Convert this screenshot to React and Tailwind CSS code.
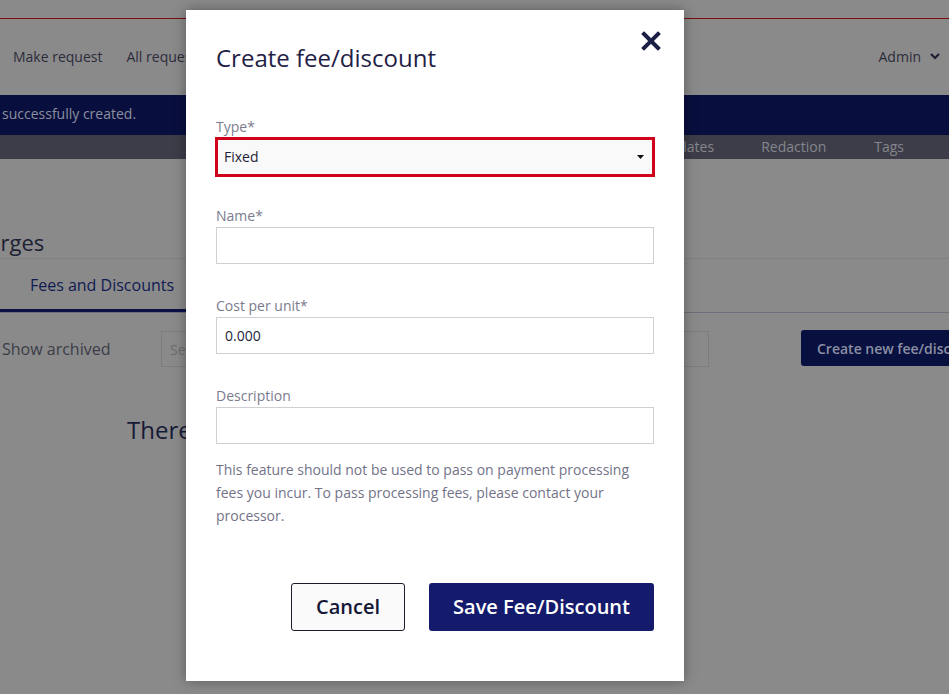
import React from "react";

// Page behind the dialog is drawn in its dimmed colours
const BackgroundPage = () => {
  return (
    <div className="min-h-[694px] bg-[#8a8a8a] text-[#232333]">
      <div className="h-[18px]" />
      <div className="h-px bg-[#7a0c10]" />
      <header className="h-[76px] flex items-center justify-between text-[14px] text-[#2c2c3a] -mt-[1px]">
        <nav className="flex items-center pl-[13px] gap-[24px]">
          <span>Make request</span>
          <span>All requests</span>
        </nav>
        <div className="flex items-center gap-2 pr-[8px] text-[14px]">
          <span>Admin</span>
          <svg width="12" height="12" viewBox="0 0 12 12" fill="none">
            <path d="M2 4l4 4 4-4" stroke="#1e2034" strokeWidth="2.2" />
          </svg>
        </div>
      </header>
      <div className="h-10 mt-[1px] bg-[#080f3e] flex items-center pl-[2px] pb-[3px] text-[14px] text-[#8c8f9e]">
        successfully created.
      </div>
      <div className="h-6 bg-[#3c3d48] flex items-center justify-end pb-[2px] text-[14px] text-[#85868d]">
        <span className="mr-[47px]">Templates</span>
        <span className="mr-[48px]">Redaction</span>
        <span className="mr-[45px]">Tags</span>
      </div>
      <div className="pt-[68px] overflow-hidden">
        <h1 className="text-[22px] leading-[30px] text-[#1d1f35] ml-[-39px] whitespace-nowrap">
          Charges
        </h1>
        <div className="h-px bg-[#7f7f86] mt-[1px]" />
        <div className="flex border-b border-[#6e6e78]">
          <div className="w-[204px] h-[53px] flex items-center justify-center pt-[2px] text-[16px] text-[#101a52] border-b-[3px] border-[#0b1145]">
            Fees and Discounts
          </div>
        </div>
        <div className="flex items-center h-[52px] mt-[10px]">
          <span className="pl-[2px] text-[16px] text-[#3c3c48] w-[161px]">Show archived</span>
          <div className="w-[548px] h-9 border border-[#7d7d7d] flex items-center pl-2 text-[14px] text-[#6a6a6a]">
            Search
          </div>
          <div className="ml-auto -mt-[2px] h-9 w-[148px] bg-[#081040] rounded-l-[3px] flex items-center pl-4 text-[14px] font-semibold text-[#8b8fa3] whitespace-nowrap overflow-hidden">
            Create new fee/discount
          </div>
        </div>
        <p className="mt-[37px] pl-[127px] text-[24px] text-[#161a36] whitespace-nowrap">
          There are no fees or discounts in this portal.
        </p>
      </div>
    </div>
  );
};

const Field = ({ label, value, className }) => (
  <div className={className}>
    <label className="block text-[14px] leading-[20px] text-[#7b7b8e] mb-px">{label}</label>
    <div className="h-[37px] border border-[#cfcfd4] flex items-center px-2 text-[14px] text-[#1d1f38]">
      {value}
    </div>
  </div>
);

const App = () => {
  return (
    <div className="relative w-[949px] h-[694px] overflow-hidden" style={{ fontFamily: '"Open Sans", "Liberation Sans", sans-serif' }}>
      <BackgroundPage />
      <div className="absolute left-[186px] top-[10px] w-[498px] h-[671px] bg-white shadow-[0_0_12px_rgba(0,0,0,0.35)] px-[30px] pt-[32px]">
        <div className="flex items-start justify-between">
          <h2 className="text-[24px] leading-[32px] text-[#1f2147]">Create fee/discount</h2>
          <button className="-mt-[11px] mr-[-7px]" aria-label="Close">
            <svg width="20" height="20" viewBox="0 0 20 20">
              <path d="M3 3L17 17M17 3L3 17" stroke="#1c1f45" strokeWidth="4" strokeLinecap="square" />
            </svg>
          </button>
        </div>

        <div className="mt-[43px]">
          <label className="block text-[14px] leading-[20px] text-[#7b7b8e]">Type*</label>
          <div className="-mx-px h-10 border-[3px] border-[#d0021b] bg-[#f9f9f9] flex items-center justify-between pl-[6px] pr-[8px] text-[14px] text-[#1d1f38]">
            <span className="-mt-[1px]">Fixed</span>
            <svg width="7" height="4" viewBox="0 0 7 4">
              <path d="M0 0h7L3.5 4z" fill="#111" />
            </svg>
          </div>
        </div>

        <Field className="mt-[29px]" label="Name*" value="" />
        <Field className="mt-[32px]" label="Cost per unit*" value="0.000" />
        <Field className="mt-[32px]" label="Description" value="" />

        <p className="mt-[14px] text-[14px] leading-[23px] text-[#737388] pr-[20px]">
          This feature should not be used to pass on payment processing fees you incur. To pass processing fees, please contact your processor.
        </p>

        <div className="mt-[56px] flex justify-end gap-6">
          <button className="w-[114px] h-12 border border-[#1c1c2e] rounded-[3px] bg-[#fafafa] text-[20px] font-semibold text-[#141736]">
            Cancel
          </button>
          <button className="w-[225px] h-12 rounded-[3px] bg-[#141b6c] text-[20px] font-semibold text-white">
            Save Fee/Discount
          </button>
        </div>
      </div>
    </div>
  );
};

export default App;
